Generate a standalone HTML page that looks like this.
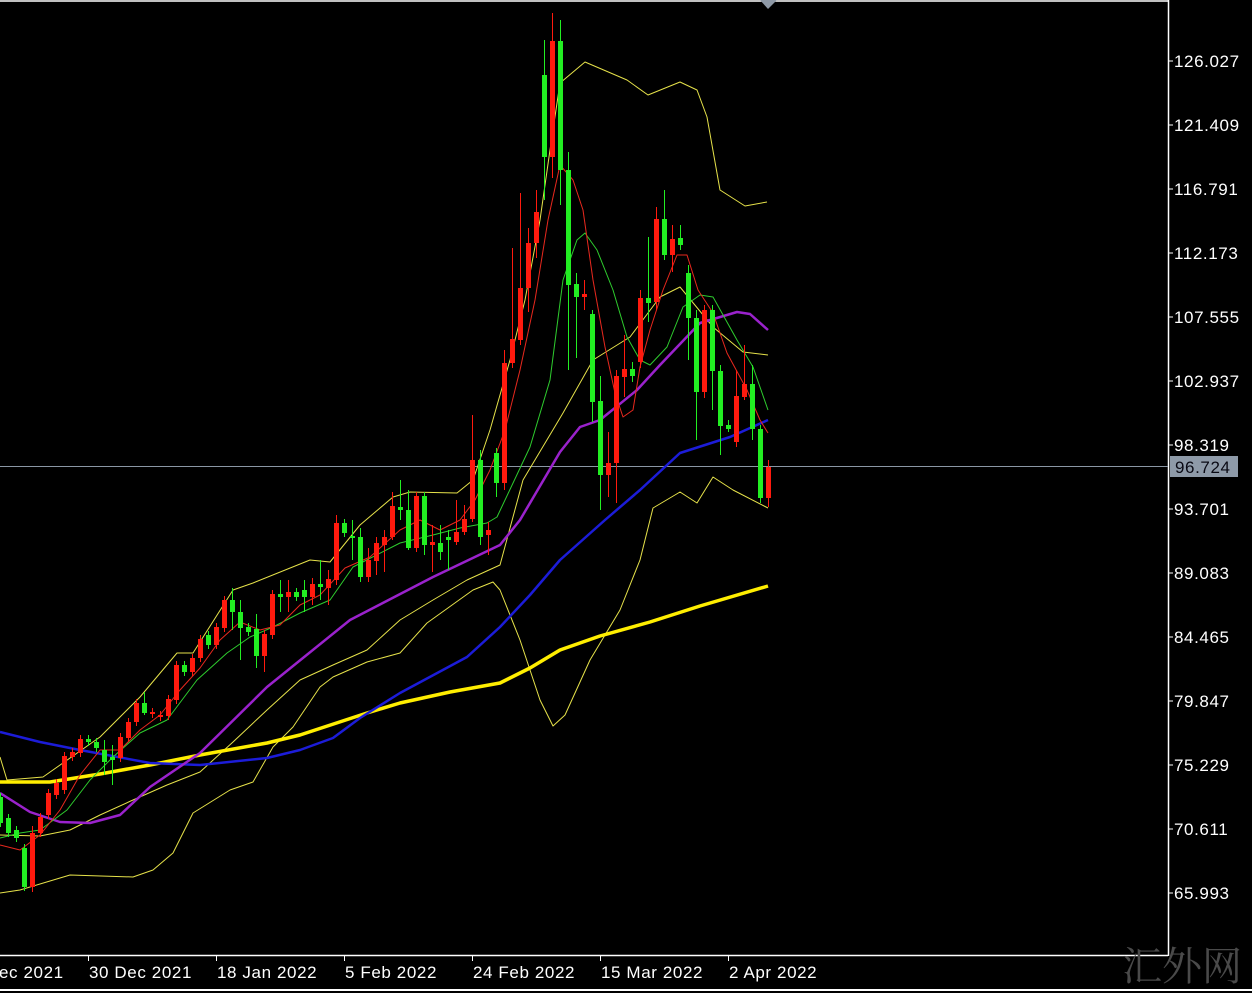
<!DOCTYPE html>
<html><head><meta charset="utf-8"><style>
html,body{margin:0;padding:0;background:#000;}
body{width:1252px;height:993px;overflow:hidden;position:relative;font-family:"Liberation Sans",sans-serif;}
svg{position:absolute;left:0;top:0;}
</style></head><body>
<svg id="s" width="1252" height="993" viewBox="0 0 1252 993" xmlns="http://www.w3.org/2000/svg">
<rect width="1252" height="993" fill="#000"/>
<line x1="0" y1="1" x2="1168" y2="1" stroke="#fff" stroke-width="1.5"/>
<polygon points="760,0 777,0 768,9" fill="#8e99a6"/>
<line x1="1168.5" y1="0" x2="1168.5" y2="956" stroke="#fff" stroke-width="1.5"/>
<line x1="0" y1="955.5" x2="1168" y2="955.5" stroke="#fff" stroke-width="1.5"/>
<line x1="0" y1="990" x2="1252" y2="990" stroke="#fff" stroke-width="2"/>
<line x1="0" y1="466.5" x2="1168" y2="466.5" stroke="#8a96a4" stroke-width="1"/>
<g id="lines" fill="none"></g>
<g id="candles"></g>
<g id="axis" fill="#fff" font-size="17" letter-spacing="0.6" font-family="Liberation Sans, sans-serif"></g>
<rect x="1170" y="456" width="68" height="21" fill="#8e9aa8"/>
<text x="1175" y="473" font-size="17" letter-spacing="0.6" fill="#0a0a14" font-family="Liberation Sans, sans-serif">96.724</text>
<text x="1122" y="980" font-size="40" fill="#4a4a4a" font-family="Noto Serif CJK SC, serif">汇外网</text>
</svg>
<script>
var NS="http://www.w3.org/2000/svg";
function el(p,t,a){var e=document.createElementNS(NS,t);for(var k in a)e.setAttribute(k,a[k]);p.appendChild(e);return e;}
var ax=document.getElementById('axis');
var labels=["126.027","121.409","116.791","112.173","107.555","102.937","98.319","93.701","89.083","84.465","79.847","75.229","70.611","65.993"];
for(var i=0;i<labels.length;i++){var y=61+i*64;
 el(ax,'line',{x1:1168,y1:y,x2:1173,y2:y,stroke:'#fff','stroke-width':1});
 var t=el(ax,'text',{x:1174,y:y+6});t.textContent=labels[i];}
var dates=[[0,"ec 2021",-1],[88,"30 Dec 2021",1],[216,"18 Jan 2022",1],[344,"5 Feb 2022",1],[472,"24 Feb 2022",1],[600,"15 Mar 2022",1],[728,"2 Apr 2022",1]];
dates.forEach(function(d){ if(d[2]>0) el(ax,'line',{x1:d[0]+0.5,y1:956,x2:d[0]+0.5,y2:961,stroke:'#fff'});
 var t=el(ax,'text',{x:d[0]+(d[2]>0?1:-1),y:978});t.textContent=d[1];});
var L=document.getElementById('lines');
function pl(pts,c,w){el(L,'polyline',{points:pts,stroke:c,'stroke-width':w,'stroke-linejoin':'round'});}
pl("0,757 7,780 43,777 100,737 140,697 177,653 193,653 233,590 253,583 310,560 330,562 360,525 393,497 410,492 457,493 473,480 490,430 510,360 525,300 540,220 550,150 560,83 585,62 627,80 648,95 680,82 697,90 707,117 720,190 745,206 767,202","#e6e24a",1);
pl("0,893 20,890 70,875 133,877 153,870 173,853 193,813 230,790 253,782 273,747 293,727 320,687 333,677 367,662 400,653 427,623 473,590 493,582 500,590 520,640 540,700 553,726 565,715 590,660 620,610 640,560 653,508 680,492 697,503 713,477 733,490 768,508","#e6e24a",1);
pl("0,835 40,836 70,830 100,815 133,800 167,785 200,772 233,742 267,710 300,680 333,665 367,650 400,620 433,600 467,580 500,565 523,480 563,413 593,360 630,337 660,297 680,287 713,327 743,352 768,355","#e6e24a",1);
pl("0,782 50,782 100,774 150,765 200,755 267,743 300,735 367,713 400,703 450,692 500,683 530,668 560,650 600,636 650,622 700,606 768,586","#ffee00",3.5);
pl("0,732 40,742 80,750 150,763 200,765 267,758 300,750 333,738 360,718 400,693 467,657 500,627 530,595 560,560 605,520 640,490 680,453 730,437 768,420","#1c1cd8",2.5);
pl("0,793 30,812 60,822 90,823 120,815 150,787 200,753 267,687 350,620 433,577 500,545 520,520 560,452 580,427 600,420 637,390 660,365 700,323 737,312 750,314 768,330","#9a22cc",2.5);
pl("0,838 20,833 40,830 67,810 90,780 113,757 140,733 167,720 197,680 227,653 250,637 273,627 300,613 330,600 353,567 400,543 433,535 460,528 487,523 497,517 530,447 550,380 563,280 577,240 585,233 597,250 613,290 627,337 640,360 650,365 667,347 683,307 700,295 713,297 737,340 753,367 768,410","#2ecc2e",1);
pl("0,845 20,850 40,835 60,810 80,775 100,750 120,750 140,730 160,715 180,690 200,668 220,640 240,622 260,630 280,625 300,605 320,595 345,568 370,557 400,530 420,520 440,530 460,520 475,500 490,470 505,430 520,370 535,300 548,220 560,165 573,180 583,210 593,280 605,347 615,393 623,417 633,410 640,367 650,330 663,290 677,255 687,255 698,290 713,313 727,353 747,390 760,420 768,433","#e8281e",1);
var C=[[0,797,823,'g'],[8,818,833,'g'],[16,830,838,'g'],[24,848,887,'g'],[32,833,887,'r',826,892],[40,817,833,'r'],[48,793,815,'r'],[56,783,795,'r'],[64,756,790,'r'],[72,752,757,'r'],[80,739,753,'r'],[88,739,742,'g'],[96,742,748,'g'],[104,750,762,'g',740,775],[112,757,760,'g',745,785],[120,737,758,'r'],[128,722,738,'r'],[136,703,722,'r'],[144,703,713,'g',692,715],[152,712,714,'r'],[160,715,717,'r'],[168,699,716,'r'],[176,665,700,'r'],[184,665,672,'g'],[192,658,672,'r'],[200,639,658,'r'],[208,635,645,'g'],[216,627,645,'r'],[224,600,628,'r'],[232,600,612,'g',588,630],[240,612,628,'g',600,660],[248,627,632,'g'],[256,629,656,'g',614,668],[264,634,656,'r',630,672],[272,594,635,'r'],[280,594,597,'g',580,612],[288,592,597,'r',580,612],[296,592,597,'g'],[304,590,597,'g',580,612],[312,584,597,'r',578,605],[320,584,587,'g',560,600],[328,579,588,'r',570,605],[336,523,580,'r',515,585],[344,523,533,'g'],[352,536,538,'g',520,560],[360,537,577,'g',528,582],[368,560,577,'r',548,582],[376,543,561,'r',537,575],[384,537,545,'r',530,572],[392,506,537,'r',492,540],[400,507,510,'g',480,520],[408,510,548,'g',490,550],[416,496,548,'r',492,552],[424,496,545,'g',492,555],[432,542,545,'r',525,572],[440,543,552,'g',525,560],[448,537,540,'g',530,570],[456,532,542,'r',500,545],[464,519,532,'r',505,535],[472,460,519,'r',415,522],[480,460,537,'g',450,545],[488,530,535,'r',522,555],[496,453,483,'g',448,497],[504,363,483,'r',350,490],[512,339,363,'r',248,368],[520,288,340,'r',193,345],[528,243,288,'r',228,312],[536,212,243,'r',190,258],[544,75,157,'g',40,200],[552,41,157,'r',13,178],[560,41,170,'g',20,205],[568,170,285,'g',152,370],[576,284,297,'g',273,358],[584,294,297,'r',280,310],[592,314,402,'g',310,422],[600,401,475,'g',376,510],[608,463,475,'r',432,497],[616,376,463,'r',370,503],[624,369,377,'r',335,397],[632,369,376,'g',362,382],[640,298,362,'r',290,368],[648,298,303,'g',237,322],[656,219,302,'r',207,310],[664,219,255,'g',190,260],[672,239,255,'r',225,272],[680,238,245,'g',225,250],[688,273,318,'g',265,360],[696,318,392,'g',310,440],[704,310,392,'r',305,398],[712,310,371,'g',305,410],[720,371,426,'g',365,455],[728,425,429,'g',420,432],[736,396,442,'r',370,447],[744,384,397,'r',345,400],[752,384,429,'g',365,440],[760,429,498,'g',425,503],[768,467,498,'r',460,507]];
var G=document.getElementById('candles');
C.forEach(function(c){var col=c[3]=='g'?'#22ee22':'#ff1a0e';
 var wt=c[4]||c[1]-4, wb=c[5]||c[2]+4;
 el(G,'line',{x1:c[0]+0.5,y1:wt,x2:c[0]+0.5,y2:wb,stroke:col,'stroke-width':1});
 el(G,'rect',{x:c[0]-2,y:c[1],width:5,height:Math.max(2,c[2]-c[1]),fill:col});});
</script>
</body></html>
